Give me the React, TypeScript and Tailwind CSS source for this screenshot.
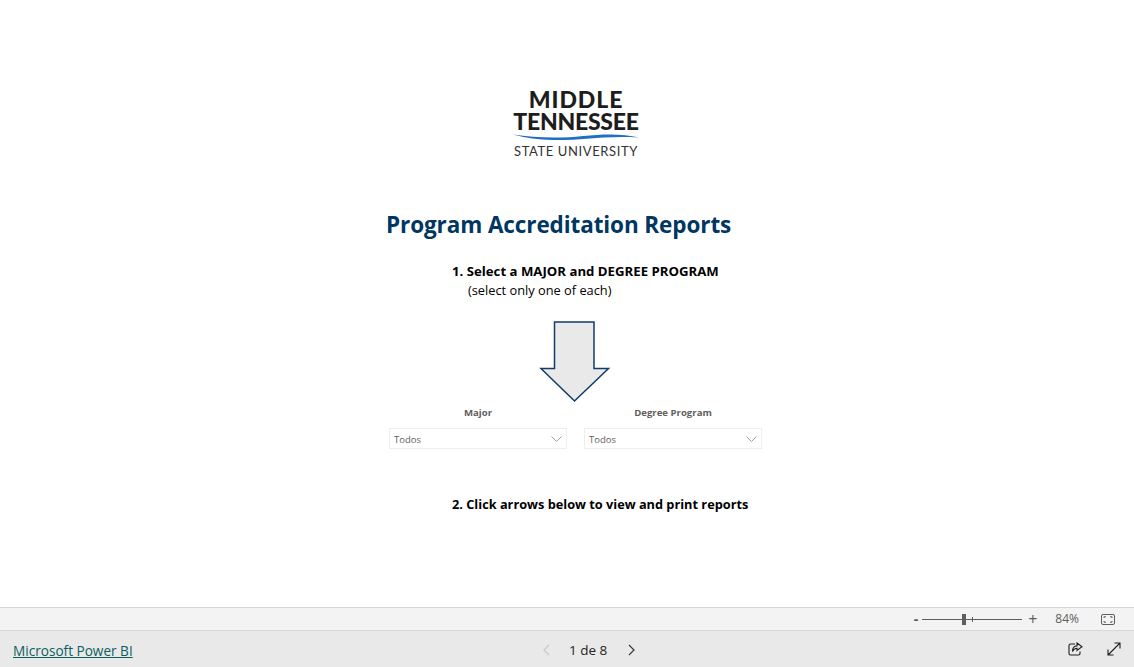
import React from "react";

const font = "font-['Open_Sans','Noto_Sans',sans-serif]";

const Slicer = ({ label }: { label: string }) => (
  <div className="w-[178px] flex flex-col">
    <div className="h-[22px] text-center text-[9.6px] leading-[14px] font-bold text-[#605e5c]">{label}</div>
    <div className="h-[21px] border border-[#eeeeee] flex items-center justify-between pl-[4px] pr-[4px]">
      <span className="text-[9.5px] text-[#605e5c] mt-[3px]">Todos</span>
      <svg width="11" height="6" viewBox="0 0 11 6" fill="none">
        <path d="M0.500 0.500l5 5 5-5" stroke="#8a9a9a" strokeWidth="0.9" />
      </svg>
    </div>
  </div>
);

const App: React.FC = () => {
  return (
    <div className={`w-[1134px] h-[667px] overflow-hidden bg-white flex flex-col ${font}`}>
      {/* report page */}
      <div className="h-[607px] flex flex-col">
        {/* logo */}
        <div className="mt-[88px] ml-[513px] w-[126px] h-[72px] flex flex-col items-center text-[#1d1d1b] font-['Lato',sans-serif]">
          <div className="text-[23px] leading-[22px] font-black tracking-[0.9px] whitespace-nowrap">MIDDLE</div>
          <div className="text-[23px] leading-[22px] font-black tracking-[-0.25px] whitespace-nowrap">TENNESSEE</div>
          <svg width="126" height="6" viewBox="0 0 126 6" className="mt-[2px]">
            <path d="M0 0.500 C22 4 48 4.500 70 2 C90 0 110 -0.500 126 3.500 C105 2.500 90 3.500 70 5 C45 7 20 6.500 0 0.500Z" fill="#1f6fc4" />
          </svg>
          <div className="text-[13px] leading-[15px] tracking-[0.6px] whitespace-nowrap mt-[4px] text-[#333]">STATE UNIVERSITY</div>
        </div>

        <h1 className="mt-[49px] ml-[386px] text-[22.5px] leading-[32px] font-bold text-[#003662] whitespace-nowrap tracking-[-0.1px]">
          Program Accreditation Reports
        </h1>

        <div className="mt-[20px] ml-[452px] text-[13.2px] leading-[20px] font-bold text-black whitespace-nowrap">
          1. Select a MAJOR and DEGREE PROGRAM
        </div>
        <div className="mt-[-1px] ml-[468px] text-[12.8px] leading-[20px] text-black whitespace-nowrap">(select only one of each)</div>

        {/* arrow */}
        <svg width="72" height="82" viewBox="0 0 72 82" className="mt-[21px] ml-[539px]">
          <path d="M15.500 1h39.500v46.500h14.500L35.500 80 2 47.500h13.500z" fill="#e9e9e9" stroke="#0f3d68" strokeWidth="1.500" />
        </svg>

        <div className="mt-[3px] ml-[389px] flex gap-[17px]">
          <Slicer label="Major" />
          <Slicer label="Degree Program" />
        </div>

        <div className="mt-[45px] ml-[452px] text-[12.75px] leading-[20px] font-bold text-black whitespace-nowrap">
          2. Click arrows below to view and print reports
        </div>
      </div>

      {/* zoom bar */}
      <div className="h-[24px] bg-[#f3f3f3] border-t border-b border-[#d8d8d8] flex items-center justify-end text-[#605e5c]">
        <span className="text-[14px] font-bold leading-none mr-[4px]">-</span>
        <div className="relative w-[100px] h-[1px] bg-[#605e5c]">
          <div className="absolute left-[40px] top-[-5px] w-[4px] h-[11px] bg-[#605e5c]" />
          <div className="absolute left-[50px] top-[-2px] w-[1px] h-[5px] bg-[#605e5c]" />
        </div>
        <span className="text-[16px] leading-none ml-[6px]">+</span>
        <span className="text-[12px] ml-[18px]">84%</span>
        <svg width="14" height="11" viewBox="0 0 14 11" fill="none" className="ml-[22px] mr-[19px]">
          <rect x="0.500" y="0.500" width="13" height="10" rx="1.500" stroke="#605e5c" />
          <path d="M3 4V2.800h2M11 4V2.800H9M3 7v1.200h2M11 7v1.200H9" stroke="#605e5c" />
        </svg>
      </div>

      {/* footer */}
      <div className="flex-1 bg-[#e9e9e9] relative flex items-center justify-between pl-[13px] pr-[13px] pt-[2px]">
        <a className="mt-[2px] text-[13.6px] text-[#0b5f5f] underline whitespace-nowrap">Microsoft Power BI</a>
        <div className="absolute left-[541px] top-[1px] h-full flex items-center">
          <svg width="10" height="12" viewBox="0 0 10 12" fill="none">
            <path d="M8 1L3 6l5 5" stroke="#c8c8c8" strokeWidth="1.200" />
          </svg>
          <span className="ml-[18px] text-[13.5px] text-[#252423] whitespace-nowrap">1 de 8</span>
          <svg width="10" height="12" viewBox="0 0 10 12" fill="none" className="ml-[20px]">
            <path d="M2 1l5 5-5 5" stroke="#3a3a3a" strokeWidth="1.200" />
          </svg>
        </div>
        <div className="flex items-center gap-[24px] mb-[3px]">
          <svg width="15" height="14" viewBox="0 0 15 14" fill="none" stroke="#1f1f1f" strokeWidth="1.100">
            <path d="M7 2H2.500A1.500 1.500 0 0 0 1 3.500v8A1.500 1.500 0 0 0 2.500 13h8a1.500 1.500 0 0 0 1.500-1.500V9.500" />
            <path d="M9 1l5 3.800-5 3.700V6.300C7 6.300 5.500 7.300 4.500 9.500c0-3.500 1.800-5.500 4.500-5.600z" />
          </svg>
          <svg width="14" height="14" viewBox="0 0 14 14" fill="none" stroke="#1f1f1f" strokeWidth="1.100">
            <path d="M1 13L13 1M7.500 1H13v5.500M1 7.500V13h5.500" />
          </svg>
        </div>
      </div>
    </div>
  );
};

export default App;
